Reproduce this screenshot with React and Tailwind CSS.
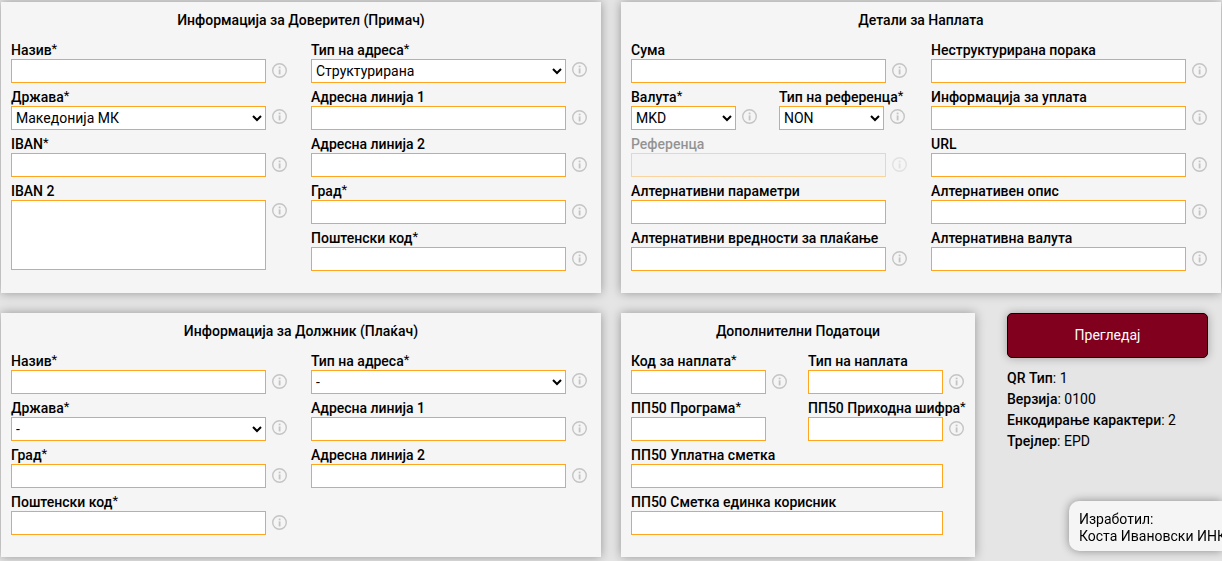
import { useId } from 'react';
import clsx from 'clsx';

function InfoIcon({ className }) {
  return (
    <svg
      viewBox="0 0 15 15"
      className={clsx('size-[15px] shrink-0 text-[#c4c4c4]', className)}
      fill="none"
      aria-hidden="true"
    >
      <circle cx="7.5" cy="7.5" r="6.8" stroke="currentColor" strokeWidth="1.4" />
      <rect x="6.7" y="3.6" width="1.8" height="1.7" fill="currentColor" />
      <rect x="6.7" y="6.4" width="1.8" height="5" fill="currentColor" />
    </svg>
  );
}

const BOX = 'block w-full min-w-0 border border-[#ffa51f] text-black outline-none';

function Field({ label, required, kind = 'input', options, info = true, disabled, end = 'pr-[14px]', className }) {
  const id = useId();
  return (
    <div className={clsx('min-w-0', disabled && 'opacity-40', className)}>
      <label htmlFor={id} className="block h-[18px] leading-[18px] font-medium whitespace-nowrap">
        {label}
        {required && <span className="align-[2px] text-[13px] leading-none font-normal">*</span>}
      </label>
      <div className={clsx('flex items-start gap-1.5', end)}>
        {kind === 'input' && (
          <input
            id={id}
            type="text"
            disabled={disabled}
            className={clsx(BOX, 'h-6 px-1', disabled ? 'bg-[#f3f3f3]' : 'bg-white')}
          />
        )}
        {kind === 'select' && (
          <select id={id} className={clsx(BOX, 'h-6 bg-white')}>
            {options.map((o) => (
              <option key={o}>{o}</option>
            ))}
          </select>
        )}
        {kind === 'textarea' && <textarea id={id} className={clsx(BOX, 'h-[70px] resize-none bg-white px-1')} />}
        {info ? (
          <InfoIcon className={kind === 'input' ? 'mt-1' : 'mt-[3px]'} />
        ) : (
          <span className="w-[15px] shrink-0" />
        )}
      </div>
    </div>
  );
}

function Card({ title, className, children }) {
  return (
    <section className={clsx('bg-[#f5f5f5] pt-2 pb-[22px] shadow-[0_0_10px_rgba(0,0,0,0.35)]', className)}>
      <h2 className="mb-[11px] text-center leading-5 font-medium">{title}</h2>
      {children}
    </section>
  );
}

function Columns({ children }) {
  return <div className="grid grid-cols-2 gap-x-[10px] pl-[10px]">{children}</div>;
}

function Column({ children }) {
  return <div className="flex min-w-0 flex-col gap-[5px]">{children}</div>;
}

function Stat({ name, value }) {
  return (
    <div>
      <dt className="inline font-medium">{name}</dt>
      <dd className="inline">: {value}</dd>
    </div>
  );
}

export default function App() {
  return (
    <main className="min-h-screen bg-[#e5e5e5] px-px pt-0.5 pb-[3px] font-[Roboto,sans-serif] text-[14px] text-black">
      <form className="grid grid-cols-2 gap-5" onSubmit={(e) => e.preventDefault()}>
        <Card title="Информација за Доверител (Примач)">
          <Columns>
            <Column>
              <Field label="Назив" required />
              <Field label="Држава" required kind="select" options={['Македонија МК']} />
              <Field label="IBAN" required />
              <Field label="IBAN 2" kind="textarea" />
            </Column>
            <Column>
              <Field label="Тип на адреса" required kind="select" options={['Структурирана']} />
              <Field label="Адресна линија 1" />
              <Field label="Адресна линија 2" />
              <Field label="Град" required />
              <Field label="Поштенски код" required />
            </Column>
          </Columns>
        </Card>

        <Card title="Детали за Наплата">
          <Columns>
            <Column>
              <Field label="Сума" />
              <div className="grid grid-cols-2 gap-x-1.5">
                <Field label="Валута" required kind="select" options={['MKD']} end="pr-4" />
                <Field label="Тип на референца" required kind="select" options={['NON']} end="pr-4" />
              </div>
              <Field label="Референца" disabled />
              <Field label="Алтернативни параметри" info={false} />
              <Field label="Алтернативни вредности за плаќање" />
            </Column>
            <Column>
              <Field label="Неструктурирана порака" />
              <Field label="Информација за уплата" />
              <Field label="URL" />
              <Field label="Алтернативен опис" />
              <Field label="Алтернативна валута" />
            </Column>
          </Columns>
        </Card>

        <Card title="Информација за Должник (Плаќач)">
          <Columns>
            <Column>
              <Field label="Назив" required />
              <Field label="Држава" required kind="select" options={['-']} />
              <Field label="Град" required />
              <Field label="Поштенски код" required />
            </Column>
            <Column>
              <Field label="Тип на адреса" required kind="select" options={['-']} />
              <Field label="Адресна линија 1" />
              <Field label="Адресна линија 2" />
            </Column>
          </Columns>
        </Card>

        <div className="flex">
          <Card title="Дополнителни Податоци" className="w-[59%]">
            <div className="grid grid-cols-2 gap-x-[10px] gap-y-[5px] pl-[10px]">
              <Field label="Код за наплата" required end="pr-[11px]" />
              <Field label="Тип на наплата" end="pr-[11px]" />
              <Field label="ПП50 Програма" required info={false} end="pr-[11px]" />
              <Field label="ПП50 Приходна шифра" required end="pr-[11px]" />
              <Field label="ПП50 Уплатна сметка" info={false} end="pr-[11px]" className="col-span-2" />
              <Field label="ПП50 Сметка единка корисник" info={false} end="pr-[11px]" className="col-span-2" />
            </div>
          </Card>
          <div className="flex-1 pr-[13px] pl-8">
            <button
              type="submit"
              className="block h-[45px] w-full rounded-[5px] border border-black bg-[#80001e] text-white shadow-[0_0_10px_rgba(0,0,0,0.3)]"
            >
              Прегледај
            </button>
            <dl className="mt-[10px] leading-[21px]">
              <Stat name="QR Тип" value="1" />
              <Stat name="Верзија" value="0100" />
              <Stat name="Енкодирање карактери" value="2" />
              <Stat name="Трејлер" value="EPD" />
            </dl>
          </div>
        </div>
      </form>

      <aside className="fixed right-0 bottom-[10px] w-[153px] rounded-l-[10px] bg-[#f5f5f5] shadow-[0_0_10px_rgba(0,0,0,0.4)]">
        <div className="overflow-hidden pt-[10px] pb-1.5 pl-[10px] leading-[17px] whitespace-nowrap">
          <p>Изработил:</p>
          <p>Коста Ивановски ИНКИ</p>
        </div>
      </aside>
    </main>
  );
}
